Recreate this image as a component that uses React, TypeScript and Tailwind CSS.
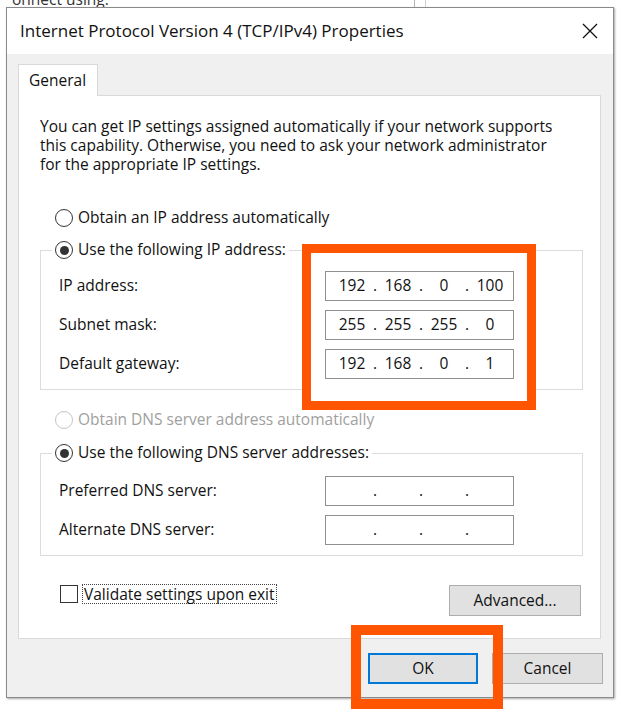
import React from "react";

const ip = [
  { label: "IP address:", parts: ["192", "168", "0", "100"] },
  { label: "Subnet mask:", parts: ["255", "255", "255", "0"] },
  { label: "Default gateway:", parts: ["192", "168", "0", "1"] },
];

const dns = [
  { label: "Preferred DNS server:", parts: ["", "", "", ""] },
  { label: "Alternate DNS server:", parts: ["", "", "", ""] },
];

function Radio({ checked, disabled }: { checked?: boolean; disabled?: boolean }) {
  return (
    <span
      className={`w-[18px] h-[18px] rounded-full border-[1.5px] flex items-center justify-center shrink-0 bg-white ${
        disabled ? "border-[#c4c4c4]" : "border-[#333333]"
      }`}
    >
      {checked && <span className="w-[9px] h-[9px] rounded-full bg-[#333333]" />}
    </span>
  );
}

function IpField({ parts }: { parts: string[] }) {
  return (
    <div className="relative z-20 w-[189px] h-[30px] border border-[#8f8f8f] bg-white flex items-center pl-[6px]">
      {parts.map((p, i) => (
        <React.Fragment key={i}>
          {i > 0 && <span className="w-[6px] text-center">.</span>}
          <span className="w-[40px] text-center">{p}</span>
        </React.Fragment>
      ))}
    </div>
  );
}

function GroupBox({
  legend,
  rows,
  className,
  gap,
}: {
  legend: string;
  rows: { label: string; parts: string[] }[];
  className: string;
  gap: string;
}) {
  return (
    <div className={`ml-[21px] mr-[17px] border border-[#dcdcdc] ${className}`}>
      <div className="-mt-[11px] ml-[11px] h-[20px] w-fit bg-white px-[3px] flex items-center gap-[5px]">
        <Radio checked />
        <span>{legend}</span>
      </div>
      <div className={`flex flex-col gap-[9px] pb-[10px] ${gap}`}>
        {rows.map((r) => (
          <div key={r.label} className="flex items-center pl-[18px]">
            <span className="w-[266px]">{r.label}</span>
            <IpField parts={r.parts} />
          </div>
        ))}
      </div>
    </div>
  );
}

export default function App() {
  return (
    <div className="relative w-[621px] h-[720px] bg-white overflow-hidden font-['Open_Sans',sans-serif] text-[15.5px] text-[#111111]">
      {/* window behind the dialog */}
      <div className="relative h-[7px] overflow-hidden">
        <div className="-mt-[12px] ml-[12px] text-[#333333]">onnect using:</div>
        <div className="absolute top-0 left-[414px] w-px h-full bg-[#b5b5b5]" />
        <div className="absolute top-0 left-[425px] w-px h-full bg-[#d0d0d0]" />
      </div>

      <div className="ml-[6px] w-[608px] h-[691px] border border-[#8a8a8a] bg-[#f0f0f0] flex flex-col shadow-[1px_1px_2px_rgba(0,0,0,0.35)]">
        <div className="h-[46px] bg-white flex items-center justify-between pl-[13px] pr-[15px] shrink-0">
          <span className="text-[17px]">Internet Protocol Version 4 (TCP/IPv4) Properties</span>
          <svg width="16" height="16" viewBox="0 0 16 16">
            <path d="M1 1L15 15M15 1L1 15" stroke="#111" strokeWidth="1.3" />
          </svg>
        </div>

        <div className="pl-[11px] pt-[10px]">
          <div className="relative z-10 w-[80px] h-[32px] -mb-px bg-white border border-b-0 border-[#d9d9d9] pl-[10px] flex items-center">
            General
          </div>
          <div className="w-[583px] h-[544px] bg-white border border-[#d9d9d9]">
            <p className="pl-[21px] pt-[21px] leading-[19px]">
              You can get IP settings assigned automatically if your network supports
              <br />
              this capability. Otherwise, you need to ask your network administrator
              <br />
              for the appropriate IP settings.
            </p>

            <div className="mt-[34px] ml-[36px] h-[20px] flex items-center gap-[5px]">
              <Radio />
              <span>Obtain an IP address automatically</span>
            </div>

            <GroupBox legend="Use the following IP address:" rows={ip} className="mt-[22px]" gap="pt-[11px]" />

            <div className="mt-[20px] ml-[36px] h-[20px] flex items-center gap-[5px] text-[#a0a0a0]">
              <Radio disabled />
              <span>Obtain DNS server address automatically</span>
            </div>

            <GroupBox
              legend="Use the following DNS server addresses:"
              rows={dns}
              className="mt-[23px]"
              gap="pt-[13px]"
            />

            <div className="mt-[28px] ml-[41px] mr-[19px] flex items-start justify-between">
              <div className="flex items-center gap-[4px]">
                <span className="w-[18px] h-[18px] border border-[#333333] bg-white" />
                <span className="border border-dotted border-[#444444] px-[1px] leading-[18px]">
                  Validate settings upon exit
                </span>
              </div>
              <button className="mt-[1px] w-[132px] h-[31px] bg-[#e1e1e1] border border-[#adadad]">
                Advanced...
              </button>
            </div>
          </div>
        </div>

        <div className="mt-[14px] pr-[10px] flex justify-end gap-[14px]">
          <button className="w-[110px] h-[31px] bg-[#e1e1e1] border-2 border-[#0078d7]">OK</button>
          <button className="w-[111px] h-[31px] bg-[#e1e1e1] border border-[#adadad]">Cancel</button>
        </div>
      </div>

      {/* orange annotation frames */}
      <div className="absolute z-10 left-[302px] top-[244px] w-[234px] h-[166px] border-[9px] border-[#ff5500] bg-white" />
      <div className="absolute z-10 left-[351px] top-[625px] w-[152px] h-[84px] border-[10px] border-[#ff5500]" />
    </div>
  );
}
